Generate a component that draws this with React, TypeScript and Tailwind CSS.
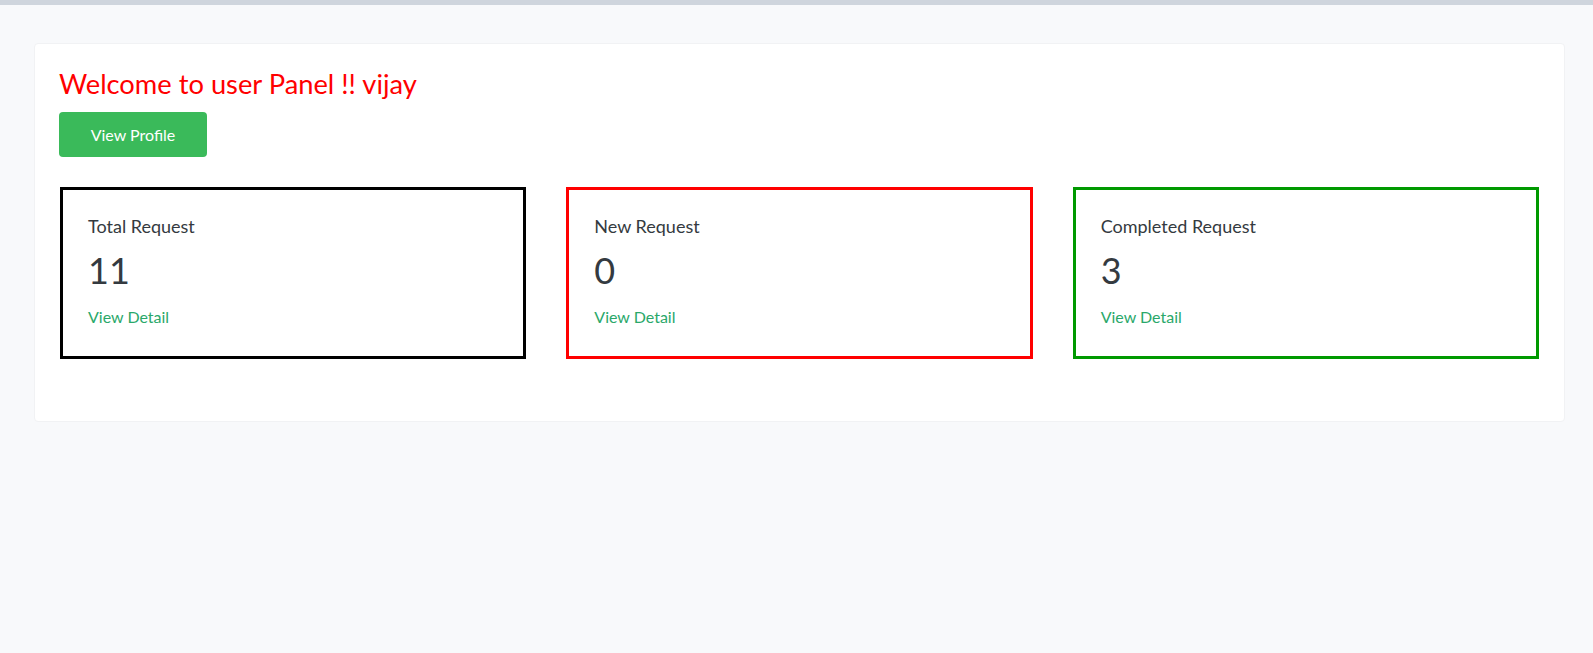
const stats = [
  { title: "Total Request", count: 11, border: "border-black" },
  { title: "New Request", count: 0, border: "border-[#ff0000]" },
  { title: "Completed Request", count: 3, border: "border-[#009900]" },
]

export default function App() {
  return (
    <div className="min-h-screen bg-[#f8f9fb] font-['Lato',sans-serif]">
      <div className="h-[5px] bg-[#cfd5dd]" />
      <div className="pt-[38px] pl-[34px] pr-[28px]">
        <div className="bg-white rounded-[4px] border border-[#f1f2f4] px-[24px] pt-[23px] pb-[62px]">
          <h3 className="text-[27.3px] leading-[34px] text-[#ff0000]">Welcome to user Panel !! vijay</h3>
          <button className="mt-[11px] w-[148px] h-[45px] rounded-[4px] bg-[#3aba5a] text-white text-[16px]">
            View Profile
          </button>
          <div className="mt-[30px] grid grid-cols-3 gap-[40px] pl-px pr-px">
            {stats.map((s) => (
              <div key={s.title} className={`h-[172px] border-[3px] ${s.border} pl-[25px] pt-[24px]`}>
                <p className="text-[18px] leading-[24px] text-[#343a40]">{s.title}</p>
                <p className="mt-[11px] text-[36px] leading-[1.2] text-[#343a40]">{s.count}</p>
                <a href="#" className="block mt-[14px] text-[16px] leading-[22px] text-[#2aa86a]">View Detail</a>
              </div>
            ))}
          </div>
        </div>
      </div>
    </div>
  )
}
